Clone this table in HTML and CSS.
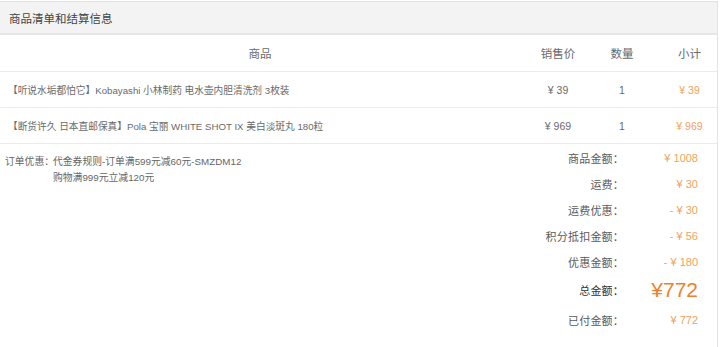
FILE: index.html
```html
<!DOCTYPE html>
<html lang="zh-CN">
<head>
<meta charset="utf-8">
<title>商品清单和结算信息</title>
<link rel="stylesheet" href="styles.css">
</head>
<body>
<div class="panel">
  <div class="panel-head">商品清单和结算信息</div>
  <div class="row row-head">
    <div class="c-name center">商品</div>
    <div class="c-price">销售价</div>
    <div class="c-qty">数量</div>
    <div class="c-sub sub-head">小计</div>
  </div>
  <div class="row">
    <div class="c-name">【听说水垢都怕它】Kobayashi 小林制药 电水壶内胆清洗剂 3枚装</div>
    <div class="c-price">¥ 39</div>
    <div class="c-qty">1</div>
    <div class="c-sub orange">¥ 39</div>
  </div>
  <div class="row">
    <div class="c-name">【断货许久 日本直邮保真】Pola 宝丽 WHITE SHOT IX 美白淡斑丸 180粒</div>
    <div class="c-price">¥ 969</div>
    <div class="c-qty">1</div>
    <div class="c-sub orange">¥ 969</div>
  </div>
  <div class="bottom">
    <div class="promo">
      <div class="promo-label">订单优惠：</div>
      <div class="promo-lines">
        <div>代金券规则-订单满599元减60元-SMZDM12</div>
        <div>购物满999元立减120元</div>
      </div>
    </div>
    <div class="summary">
      <div class="s-row"><span class="s-label">商品金额：</span><span class="s-val">¥ 1008</span></div>
      <div class="s-row"><span class="s-label">运费：</span><span class="s-val">¥ 30</span></div>
      <div class="s-row"><span class="s-label">运费优惠：</span><span class="s-val">- ¥ 30</span></div>
      <div class="s-row"><span class="s-label">积分抵扣金额：</span><span class="s-val">- ¥ 56</span></div>
      <div class="s-row"><span class="s-label">优惠金额：</span><span class="s-val">- ¥ 180</span></div>
      <div class="s-row s-total"><span class="s-label">总金额：</span><span class="s-val">¥772</span></div>
      <div class="s-row s-paid"><span class="s-label">已付金额：</span><span class="s-val">¥ 772</span></div>
    </div>
  </div>
</div>
</body>
</html>
```
FILE: styles.css
```css
* { box-sizing: border-box; }
html, body { margin: 0; padding: 0; background: #fff; }
body {
  font-family: "Liberation Sans", "Noto Sans CJK SC", sans-serif;
  color: #666;
  width: 720px;
  height: 347px;
  overflow: hidden;
}
.panel {
  width: 718px;
  height: 347px;
  margin-top: 1px;
  border-top: 1px solid #e3e3e3;
  border-right: 1px solid #e3e3e3;
}
.panel-head {
  height: 33px;
  line-height: 31px;
  padding-top: 2px;
  background: #f3f3f3;
  border-bottom: 2px solid #e6e6e6;
  padding-left: 9px;
  font-size: 11.5px;
  color: #444;
}
.row {
  display: grid;
  grid-template-columns: 520px 76px 52px 69px;
  height: 36px;
  align-items: center;
  border-bottom: 1px solid #ebebeb;
  font-size: 10.5px;
  color: #6a6a6a;
}
.row-head {
  height: 37px;
  font-size: 11.5px;
  color: #6a6a6a;
}
.c-name { padding-left: 8px; white-space: nowrap; font-size: 9.7px; }
.row-head .c-name { font-size: 11.5px; }
.c-name.center { text-align: center; padding-left: 0; }
.c-price, .c-qty { text-align: center; }
.c-sub { text-align: center; padding-left: 14px; }
.orange { color: #f2a25e; }
.bottom {
  display: flex;
  justify-content: space-between;
}
.promo {
  display: flex;
  padding: 10px 0 0 5px;
  font-size: 9.8px;
  line-height: 16px;
  color: #666;
}
.promo-label { width: 48px; white-space: nowrap; }
.summary {
  display: flex;
  flex-direction: column;
  width: 300px;
  padding-top: 1px;
  padding-right: 19px;
}
.s-row {
  display: grid;
  grid-template-columns: 1fr 74px;
  height: 26px;
  align-items: center;
  font-size: 11px;
}
.s-label { text-align: right; color: #5a5a5a; letter-spacing: 0.2px; }
.s-val { text-align: right; color: #f2a25e; }
.s-total { height: 29px; padding-top: 1px; }
.s-total .s-label { color: #333; }
.s-total .s-val { font-size: 21px; color: #ee7f2c; }
.s-paid { height: 32px; }
```
